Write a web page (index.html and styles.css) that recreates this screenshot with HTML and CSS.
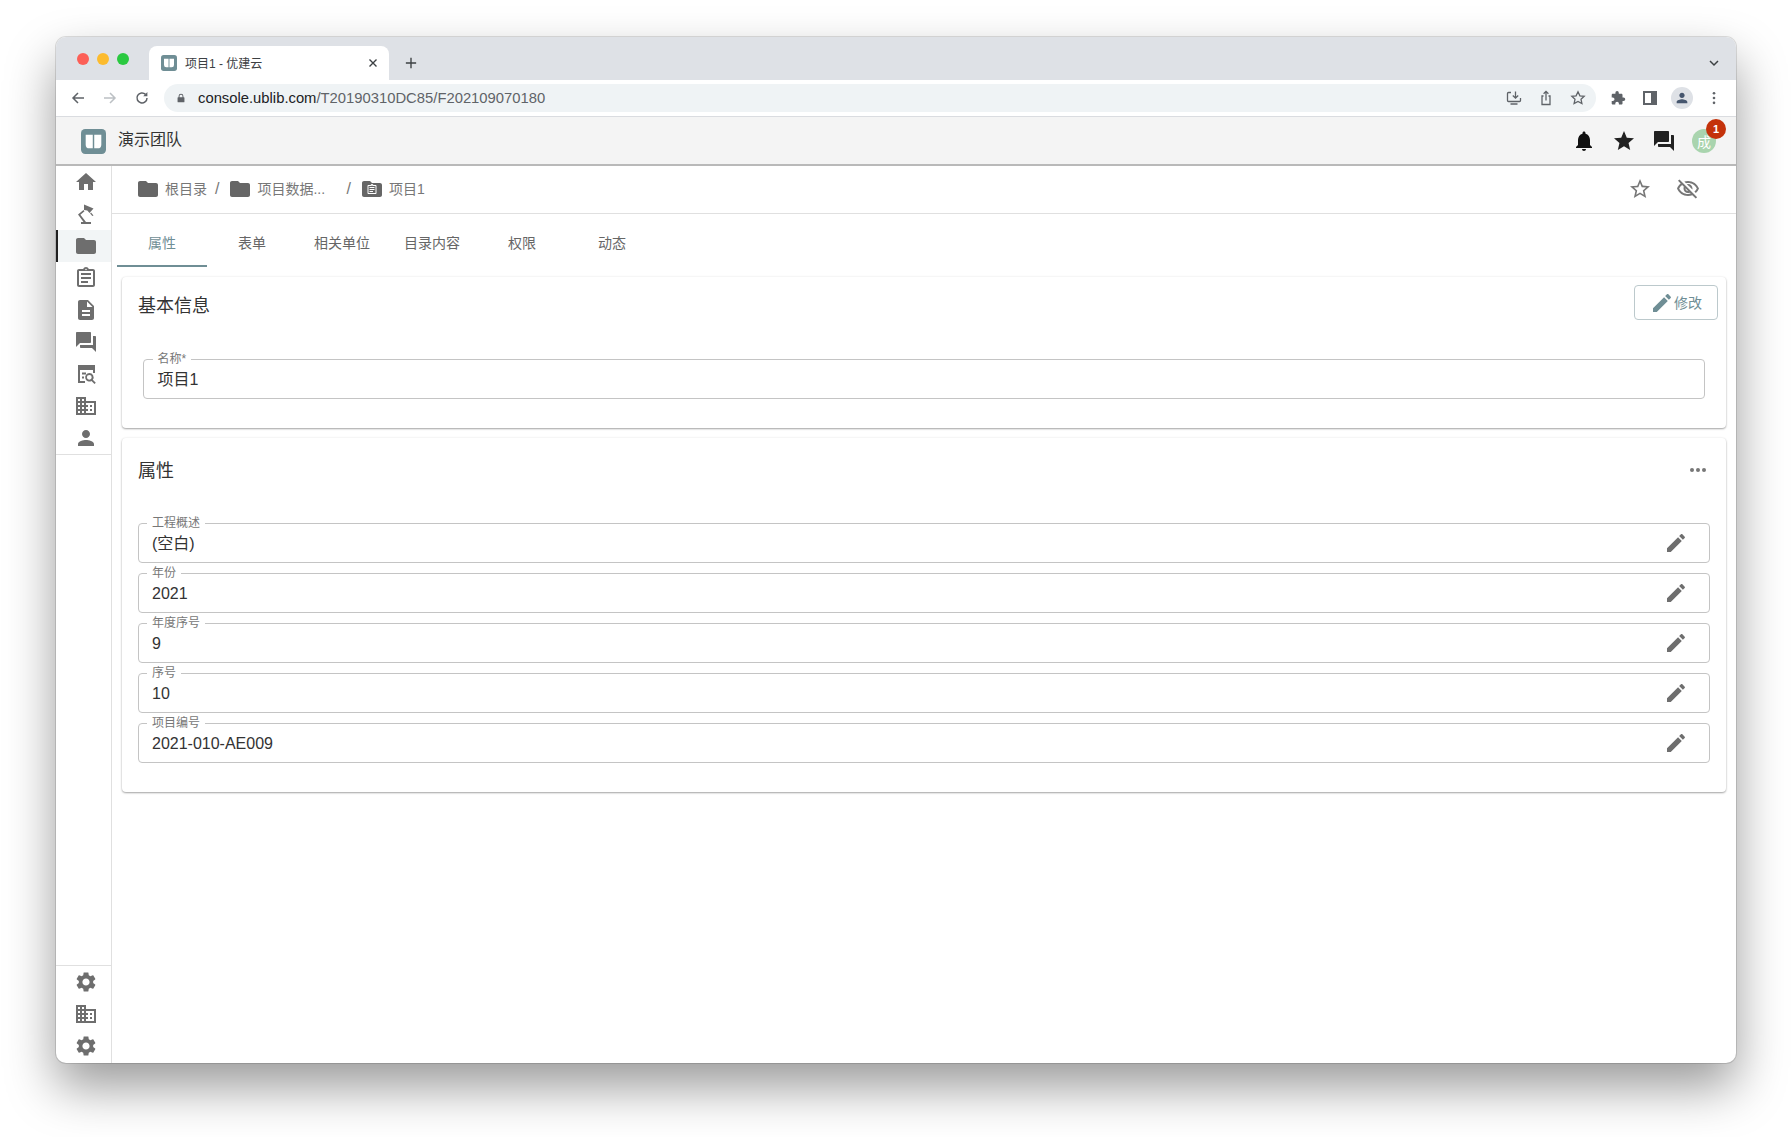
FILE: index.html
```html
<!DOCTYPE html>
<html lang="zh-CN">
<head>
<meta charset="utf-8">
<title>项目1 - 优建云</title>
<link rel="stylesheet" href="styles.css">
</head>
<body>
<svg class="defs" width="0" height="0" aria-hidden="true">
  <defs>
    <symbol id="i-home" viewBox="0 0 24 24"><path d="M10 20v-6h4v6h5v-8h3L12 3 2 12h3v8z"/></symbol>
    <symbol id="i-folder" viewBox="0 0 24 24"><path d="M10 4H4c-1.1 0-1.99.9-1.99 2L2 18c0 1.1.9 2 2 2h16c1.1 0 2-.9 2-2V8c0-1.1-.9-2-2-2h-8l-2-2z"/></symbol>
    <symbol id="i-clip" viewBox="0 0 24 24"><path d="M7 15h7v2H7zm0-4h10v2H7zm0-4h10v2H7z"/><path d="M19 3h-4.18C14.4 1.84 13.3 1 12 1c-1.3 0-2.4.84-2.82 2H5c-1.1 0-2 .9-2 2v14c0 1.1.9 2 2 2h14c1.1 0 2-.9 2-2V5c0-1.1-.9-2-2-2zm-7-.25c.41 0 .75.34.75.75s-.34.75-.75.75-.75-.34-.75-.75.34-.75.75-.75zM19 19H5V5h14v14z"/></symbol>
    <symbol id="i-doc" viewBox="0 0 24 24"><path d="M14 2H6c-1.1 0-1.99.9-1.99 2L4 20c0 1.1.89 2 1.99 2H18c1.1 0 2-.9 2-2V8l-6-6zm2 16H8v-2h8v2zm0-4H8v-2h8v2zm-3-5V3.5L18.5 9H13z"/></symbol>
    <symbol id="i-forum" viewBox="0 0 24 24"><path d="M21 6h-2v9H6v2c0 .55.45 1 1 1h11l4 4V7c0-.55-.45-1-1-1zm-4 6V3c0-.55-.45-1-1-1H3c-.55 0-1 .45-1 1v14l4-4h10c.55 0 1-.45 1-1z"/></symbol>
    <symbol id="i-domain" viewBox="0 0 24 24"><path d="M12 7V3H2v18h20V7H12zM6 19H4v-2h2v2zm0-4H4v-2h2v2zm0-4H4V9h2v2zm0-4H4V5h2v2zm4 12H8v-2h2v2zm0-4H8v-2h2v2zm0-4H8V9h2v2zm0-4H8V5h2v2zm10 12h-8v-2h2v-2h-2v-2h2v-2h-2V9h8v10zm-2-8h-2v2h2v-2zm0 4h-2v2h2v-2z"/></symbol>
    <symbol id="i-person" viewBox="0 0 24 24"><path d="M12 12c2.21 0 4-1.79 4-4s-1.79-4-4-4-4 1.79-4 4 1.79 4 4 4zm0 2c-2.67 0-8 1.34-8 4v2h16v-2c0-2.66-5.33-4-8-4z"/></symbol>
    <symbol id="i-gear" viewBox="0 0 24 24"><path d="M19.14 12.94c.04-.3.06-.61.06-.94 0-.32-.02-.64-.07-.94l2.03-1.58c.18-.14.23-.41.12-.61l-1.92-3.32c-.12-.22-.37-.29-.59-.22l-2.39.96c-.5-.38-1.03-.7-1.62-.94l-.36-2.54c-.04-.24-.24-.41-.48-.41h-3.84c-.24 0-.43.17-.47.41l-.36 2.54c-.59.24-1.13.57-1.62.94l-2.39-.96c-.22-.08-.47 0-.59.22L2.74 8.87c-.12.21-.08.47.12.61l2.03 1.58c-.05.3-.09.63-.09.94s.02.64.07.94l-2.03 1.58c-.18.14-.23.41-.12.61l1.92 3.32c.12.22.37.29.59.22l2.39-.96c.5.38 1.03.7 1.62.94l.36 2.54c.05.24.24.41.48.41h3.84c.24 0 .44-.17.47-.41l.36-2.54c.59-.24 1.13-.56 1.62-.94l2.39.96c.22.08.47 0 .59-.22l1.92-3.32c.12-.22.07-.47-.12-.61l-2.01-1.58zM12 15.6c-1.98 0-3.6-1.62-3.6-3.6s1.62-3.6 3.6-3.6 3.6 1.62 3.6 3.6-1.62 3.6-3.6 3.6z"/></symbol>
    <symbol id="i-edit" viewBox="0 0 24 24"><path d="M3 17.25V21h3.75L17.81 9.94l-3.75-3.75L3 17.25zM20.71 7.04c.39-.39.39-1.02 0-1.41l-2.34-2.34c-.39-.39-1.02-.39-1.41 0l-1.83 1.83 3.75 3.75 1.83-1.83z"/></symbol>
    <symbol id="i-star" viewBox="0 0 24 24"><path d="M12 17.27L18.18 21l-1.64-7.03L22 9.24l-7.19-.61L12 2 9.19 8.63 2 9.24l5.46 4.73L5.82 21z"/></symbol>
    <symbol id="i-starb" viewBox="0 0 24 24"><path d="M22 9.24l-7.19-.62L12 2 9.19 8.63 2 9.24l5.46 4.73L5.82 21 12 17.27 18.18 21l-1.63-7.03L22 9.24zM12 15.4l-3.76 2.27 1-4.28-3.32-2.88 4.38-.38L12 6.1l1.71 4.04 4.38.38-3.32 2.88 1 4.28L12 15.4z"/></symbol>
    <symbol id="i-logo" viewBox="0 0 24 24"><rect x="0" y="0" width="24" height="24" rx="4" fill="#6f8e95"/><path d="M4.5 5.5h6.8v13H8a3.5 3.5 0 0 1-3.5-3.5zM12.700 5.5h6.800V15a3.500 3.500 0 0 1-3.500 3.500h-3.300z" fill="#fff"/></symbol>
  </defs>
</svg>

<div class="window">
  <div class="tabstrip">
    <div class="lights"><i class="light red"></i><i class="light yellow"></i><i class="light green"></i></div>
    <div class="browser-tab">
      <svg class="favicon"><use href="#i-logo"/></svg>
      <span class="browser-tab-title">项目1 - 优建云</span>
      <svg class="tab-close" viewBox="0 0 12 12"><path d="M2.500 2.500l7 7M9.500 2.500l-7 7"/></svg>
    </div>
    <svg class="tab-plus" viewBox="0 0 14 14"><path d="M7 1v12M1 7h12"/></svg>
    <svg class="tab-menu" viewBox="0 0 12 12"><path d="M2 4l4 4 4-4"/></svg>
  </div>

  <div class="toolbar">
    <svg class="nav" viewBox="0 0 16 16"><path d="M14 8H3M8 3L3 8l5 5"/></svg>
    <svg class="nav nav-off" viewBox="0 0 16 16"><path d="M2 8h11M8 3l5 5-5 5"/></svg>
    <svg class="nav" viewBox="0 0 16 16"><path d="M13 8a5 5 0 1 1-1.500-3.600"/><path class="fill" d="M13.400 2v4.200H9.200z"/></svg>
    <div class="omnibox">
      <svg class="lock" viewBox="0 0 10 12"><path d="M2 5V3.600a3 3 0 0 1 6 0V5h.6c.4 0 .7.3.7.7v5c0 .4-.3.7-.7.7H1.400c-.4 0-.7-.3-.7-.7v-5c0-.4.3-.7.7-.7zm1.200 0h3.600V3.600a1.800 1.800 0 0 0-3.600 0z"/></svg>
      <span class="url"><b>console.ublib.com</b>/T20190310DC85/F202109070180</span>
      <span class="spacer"></span>
      <svg class="omni-icon" viewBox="0 0 16 16"><path d="M5 2.500H2.500a1 1 0 0 0-1 1v7a1 1 0 0 0 1 1h11a1 1 0 0 0 1-1V8M9.500 1.500v6.500M6.800 5.500l2.700 2.700 2.700-2.700M4.500 14h7"/></svg>
      <svg class="omni-icon" viewBox="0 0 16 16"><path d="M5.500 6H4v8.500h8V6h-1.500M8 10.500V1.500M5.600 3.800L8 1.400l2.400 2.400"/></svg>
      <svg class="omni-icon" viewBox="0 0 16 16"><path d="M8 1.800l1.900 4 4.300.5-3.200 3 .9 4.300L8 11.400l-3.900 2.200.9-4.300-3.200-3 4.300-.5z"/></svg>
    </div>
    <svg class="ext" viewBox="0 0 15 16"><path d="M13 7.500h-1V5c0-.7-.5-1.200-1.200-1.200H8.300V2.700a1.700 1.700 0 0 0-3.400 0v1.100H2.400c-.7 0-1.200.5-1.200 1.200v2.400h1a1.800 1.800 0 0 1 0 3.600h-1v2.400c0 .7.5 1.200 1.200 1.200h2.400v-1a1.800 1.800 0 0 1 3.600 0v1h2.400c.7 0 1.200-.5 1.200-1.200V11h1a1.750 1.750 0 0 0 0-3.500z"/></svg>
    <svg class="panel" viewBox="0 0 14 14"><path d="M0 0h14v14H0zM2 2v10h6V2z" fill-rule="evenodd"/></svg>
    <div class="profile"><svg viewBox="0 0 24 24"><use href="#i-person"/></svg></div>
    <svg class="kebab" viewBox="0 0 4 16"><circle cx="2" cy="2.500" r="1.500"/><circle cx="2" cy="8" r="1.500"/><circle cx="2" cy="13.500" r="1.500"/></svg>
  </div>

  <header class="appbar">
    <svg class="app-logo"><use href="#i-logo"/></svg>
    <span class="app-team">演示团队</span>
    <span class="spacer"></span>
    <svg class="app-icon bell" viewBox="0 0 24 24"><path d="M12 22c1.100 0 2-.9 2-2h-4c0 1.100.89 2 2 2zm6-6v-5c0-3.070-1.640-5.640-4.500-6.320V4c0-.83-.67-1.500-1.500-1.500s-1.500.67-1.500 1.500v.68C7.630 5.360 6 7.920 6 11v5l-2 2v1h16v-1l-2-2z"/></svg>
    <svg class="app-icon"><use href="#i-star"/></svg>
    <svg class="app-icon"><use href="#i-forum"/></svg>
    <div class="avatar">成<span class="badge">1</span></div>
  </header>

  <div class="body">
    <nav class="sidebar">
      <div class="side-top">
        <a class="side-item"><svg><use href="#i-home"/></svg></a>
        <a class="side-item"><svg viewBox="0 0 24 24"><path d="M7 20h10v2H7zM9.500 8L4 12.500 9.500 20H12L6.400 12.700 10.500 9.300zM10 2.500l9.500 4-4 4.500-2.200-2.400-3.300-.6z"/><path d="M17 10.500l2.500 3-1.200.5-2.200-2.600z"/></svg></a>
        <a class="side-item active"><svg><use href="#i-folder"/></svg></a>
        <a class="side-item"><svg><use href="#i-clip"/></svg></a>
        <a class="side-item"><svg><use href="#i-doc"/></svg></a>
        <a class="side-item"><svg><use href="#i-forum"/></svg></a>
        <a class="side-item"><svg viewBox="0 0 24 24"><path d="M4 3h17v8h-2V8H6v11h5v2H4zM8 10.500h4v2H8zM8 14.500h2v2H8z"/><path d="M15.300 11a4.300 4.300 0 0 1 3.500 6.800l3 3-1.300 1.300-3-3A4.300 4.300 0 1 1 15.300 11zm0 1.900a2.400 2.400 0 1 0 0 4.800 2.400 2.400 0 0 0 0-4.800z"/></svg></a>
        <a class="side-item"><svg><use href="#i-domain"/></svg></a>
        <a class="side-item"><svg><use href="#i-person"/></svg></a>
      </div>
      <div class="side-bottom">
        <a class="side-item"><svg><use href="#i-gear"/></svg></a>
        <a class="side-item"><svg><use href="#i-domain"/></svg></a>
        <a class="side-item"><svg><use href="#i-gear"/></svg></a>
      </div>
    </nav>

    <main class="main">
      <div class="crumbs">
        <svg class="crumb-icon"><use href="#i-folder"/></svg><span class="crumb">根目录</span><span class="sep">/</span>
        <svg class="crumb-icon"><use href="#i-folder"/></svg><span class="crumb crumb-wide">项目数据...</span><span class="sep">/</span>
        <svg class="crumb-icon" viewBox="0 0 24 24"><path d="M10 4H4c-1.100 0-2 .9-2 2v12c0 1.100.9 2 2 2h16c1.100 0 2-.9 2-2V8c0-1.100-.9-2-2-2h-8z"/><g class="crumb-clip"><use href="#i-clip" width="24" height="24"/></g></svg><span class="crumb">项目1</span>
        <span class="spacer"></span>
        <svg class="crumb-action"><use href="#i-starb"/></svg>
        <svg class="crumb-action" viewBox="0 0 24 24"><path d="M12 6c3.790 0 7.170 2.130 8.820 5.500-.59 1.220-1.420 2.270-2.410 3.120l1.410 1.410c1.390-1.230 2.490-2.770 3.180-4.530C21.270 7.110 17 4 12 4c-1.270 0-2.490.2-3.640.57l1.650 1.650C10.660 6.090 11.320 6 12 6zm-1.070 1.140L13 9.210c.57.25 1.030.71 1.280 1.280l2.070 2.070c.08-.34.14-.7.14-1.070C16.500 9.010 14.480 7 12 7c-.37 0-.72.05-1.070.14zM2.010 3.870l2.680 2.680C3.060 7.830 1.770 9.530 1 11.500 2.730 15.890 7 19 12 19c1.520 0 2.980-.29 4.320-.82l3.420 3.420 1.410-1.410L3.420 2.450 2.010 3.870zm7.500 7.500l2.610 2.610c-.04.01-.08.02-.12.02-1.380 0-2.500-1.120-2.500-2.500 0-.05.01-.08.01-.13zm-3.400-3.400l1.750 1.750c-.23.55-.36 1.150-.36 1.780 0 2.480 2.020 4.500 4.500 4.500.63 0 1.230-.13 1.770-.36l.98.98c-.88.24-1.800.38-2.750.38-3.790 0-7.170-2.130-8.820-5.500.7-1.430 1.720-2.610 2.930-3.530z"/></svg>
      </div>

      <div class="tabs">
        <a class="tab active">属性</a>
        <a class="tab">表单</a>
        <a class="tab">相关单位</a>
        <a class="tab">目录内容</a>
        <a class="tab">权限</a>
        <a class="tab">动态</a>
      </div>

      <section class="card card-basic">
        <div class="card-head">
          <h2 class="card-title">基本信息</h2>
          <button class="edit-btn"><svg><use href="#i-edit"/></svg><span class="edit-text">修改</span></button>
        </div>
        <fieldset class="field field-name">
          <legend class="field-label">名称*</legend>
          <div class="field-value">项目1</div>
        </fieldset>
      </section>

      <section class="card card-props">
        <div class="card-head">
          <h2 class="card-title">属性</h2>
          <svg class="more" viewBox="0 0 16 4"><circle cx="2" cy="2" r="2"/><circle cx="8" cy="2" r="2"/><circle cx="14" cy="2" r="2"/></svg>
        </div>
        <div class="field-list">
          <fieldset class="field">
            <legend class="field-label">工程概述</legend>
            <div class="field-value">(空白)</div>
            <svg class="field-edit"><use href="#i-edit"/></svg>
          </fieldset>
          <fieldset class="field">
            <legend class="field-label">年份</legend>
            <div class="field-value">2021</div>
            <svg class="field-edit"><use href="#i-edit"/></svg>
          </fieldset>
          <fieldset class="field">
            <legend class="field-label">年度序号</legend>
            <div class="field-value">9</div>
            <svg class="field-edit"><use href="#i-edit"/></svg>
          </fieldset>
          <fieldset class="field">
            <legend class="field-label">序号</legend>
            <div class="field-value">10</div>
            <svg class="field-edit"><use href="#i-edit"/></svg>
          </fieldset>
          <fieldset class="field">
            <legend class="field-label">项目编号</legend>
            <div class="field-value">2021-010-AE009</div>
            <svg class="field-edit"><use href="#i-edit"/></svg>
          </fieldset>
        </div>
      </section>
    </main>
  </div>
</div>
</body>
</html>
```

FILE: styles.css
```css
* { box-sizing: border-box; }
html, body { margin: 0; height: 100%; }
body {
  padding: 37px 56px 74px;
  background: #fff;
  font-family: "Liberation Sans", "Noto Sans CJK SC", sans-serif;
  color: #333;
  overflow: hidden;
}
.defs { position: absolute; }
.spacer { flex: 1; }

.window {
  height: 1026px;
  display: flex;
  flex-direction: column;
  background: #fff;
  border-radius: 10px;
  overflow: hidden;
  box-shadow: 0 0 0 1px rgba(0,0,0,.12), 0 24px 50px rgba(0,0,0,.4);
}

/* browser chrome */
.tabstrip {
  height: 43px;
  flex: none;
  background: #dee1e6;
  display: flex;
  align-items: flex-end;
}
.lights { display: flex; gap: 8px; align-self: flex-start; padding: 16px 0 0 21px; width: 93px; flex: none; }
.light { width: 12px; height: 12px; border-radius: 50%; }
.red { background: #fc5f57; }
.yellow { background: #fcbb2e; }
.green { background: #2ac940; }
.browser-tab {
  width: 240px;
  height: 34px;
  background: #fff;
  border-radius: 8px 8px 0 0;
  display: flex;
  align-items: center;
  padding: 0 10px 0 12px;
  gap: 8px;
  font-size: 12px;
  color: #3c4043;
}
.favicon { width: 16px; height: 16px; flex: none; }
.browser-tab-title { flex: 1; margin-bottom: 2px; }
.tab-close { width: 12px; height: 12px; fill: none; stroke: #3c4043; stroke-width: 1.4; }
.tab-plus { width: 12px; height: 12px; fill: none; stroke: #3c4043; stroke-width: 1.6; margin: 0 0 11px 16px; }
.tab-menu { width: 12px; height: 12px; fill: none; stroke: #3c4043; stroke-width: 1.5; margin: 0 16px 11px auto; }

.toolbar {
  height: 37px;
  flex: none;
  background: #fff;
  border-bottom: 1px solid #dadce0;
  display: flex;
  align-items: center;
  padding: 0 20px 1px 14px;
}
.nav { width: 16px; height: 16px; fill: none; stroke: #5f6368; stroke-width: 1.5; margin-right: 16px; flex: none; }
.nav .fill { fill: #5f6368; stroke: none; }
.nav-off { stroke: #bcc0c4; }
.omnibox {
  flex: 1;
  height: 28px;
  background: #eff3f5;
  border-radius: 14px;
  display: flex;
  align-items: center;
  padding: 0 10px 0 13px;
  margin-left: -2px;
  margin-right: 14px;
}
.lock { width: 8px; height: 10px; fill: #5f6368; flex: none; margin-right: 13px; }
.url { font-size: 14.8px; color: #5f6368; }
.url b { font-weight: 400; color: #202124; }
.omni-icon { width: 16px; height: 16px; fill: none; stroke: #5f6368; stroke-width: 1.3; margin-left: 16px; flex: none; }
.ext { width: 16px; height: 16px; fill: #5f6368; flex: none; margin-right: 17px; }
.panel { width: 14px; height: 14px; fill: #5f6368; flex: none; margin-right: 14px; }
.profile { width: 22px; height: 22px; border-radius: 50%; background: #dee1e6; display: flex; align-items: center; justify-content: center; margin-right: 19px; flex: none; }
.profile svg { width: 16px; height: 16px; fill: #46566e; }
.kebab { width: 4px; height: 14px; fill: #5f6368; flex: none; }

/* app header */
.appbar {
  height: 49px;
  flex: none;
  background: #f4f4f4;
  border-bottom: 2px solid #b9b9b9;
  display: flex;
  align-items: center;
  padding: 0 20px 0 25px;
}
.app-logo { width: 25px; height: 25px; margin: 2px 12px 0 0; }
.app-team { font-size: 16px; color: #333; margin-bottom: 6px; }
.app-icon { width: 24px; height: 24px; fill: #212121; margin-right: 16px; flex: none; }
.bell { fill: #111; }
.avatar {
  width: 24px; height: 24px; border-radius: 50%;
  background: #a9d4ae; color: #fff; font-size: 14px;
  display: flex; align-items: center; justify-content: center;
  position: relative; flex: none;
}
.badge {
  position: absolute; top: -10px; right: -10px;
  width: 20px; height: 20px; border-radius: 50%;
  background: #c4320a; color: #fff; font-size: 11px; font-weight: 700;
  display: flex; align-items: center; justify-content: center;
}

/* layout */
.body { flex: 1; display: flex; min-height: 0; }
.sidebar {
  width: 56px;
  flex: none;
  border-right: 1px solid #e0e0e0;
  display: flex;
  flex-direction: column;
  justify-content: space-between;
}
.side-top { border-bottom: 1px solid #e0e0e0; }
.side-bottom { border-top: 1px solid #e0e0e0; padding-bottom: 1px; }
.side-item {
  height: 32px;
  display: flex;
  align-items: center;
  border-left: 2px solid transparent;
  padding-left: 16px;
}
.side-item svg { width: 24px; height: 24px; fill: #6e6e6e; }
.side-item.active { background: #f2f5f6; border-left-color: #212121; }

.main { flex: 1; min-width: 0; padding-left: 5px; }
.crumbs {
  height: 48px;
  border-bottom: 1px solid #e0e0e0;
  margin-left: -5px;
  display: flex;
  align-items: center;
  padding: 0 36px 2px 24px;
  font-size: 14px;
  color: #777;
}
.crumb-icon { width: 24px; height: 24px; fill: #666; margin-right: 5px; flex: none; }
.crumb-clip { fill: #fff; transform: translate(6px, 6.500px) scale(.5); }
.crumb { white-space: nowrap; margin-bottom: 2px; }
.crumb-wide { width: 81px; }
.sep { margin: 0 9px 0 8px; font-size: 16px; }
.crumb-action { width: 24px; height: 24px; fill: #777; margin-left: 24px; flex: none; }

.tabs { display: flex; height: 53px; }
.tab {
  width: 90px;
  display: flex;
  align-items: center;
  justify-content: center;
  font-size: 14px;
  color: #666;
  border-bottom: 2px solid transparent;
  padding-top: 4px;
}
.tab.active { color: #6f8e95; border-bottom-color: #6f8e95; }

.card {
  margin: 10px 10px 0 5px;
  background: #fff;
  border-radius: 4px;
  box-shadow: 0 1px 2px rgba(0,0,0,.35), 0 0 3px rgba(0,0,0,.06);
  padding: 0 16px;
}
.card-basic { height: 151px; }
.card-props { height: 354px; }
.card-head { height: 56px; display: flex; align-items: center; justify-content: space-between; }
.card-props .card-head { height: 64px; }
.card-title { margin: 0 0 2px; font-size: 18px; font-weight: 400; color: #333; }
.edit-btn {
  width: 84px; height: 35px;
  margin: 0 -8px 5px 0;
  background: #fff;
  border: 1px solid #bcc9cc;
  border-radius: 4px;
  color: #6f8e95;
  font: 14px "Liberation Sans", "Noto Sans CJK SC", sans-serif;
  display: flex; align-items: center; justify-content: center;
  padding: 0;
}
.edit-btn svg { width: 24px; height: 24px; fill: #6f8e95; }
.edit-text { margin-bottom: 2px; }
.more { width: 16px; height: 4px; fill: #777; margin-right: 4px; }

.field {
  position: relative;
  margin: 0;
  padding: 0 13px;
  height: 46px;
  border: 1px solid #c4c4c4;
  border-radius: 4px;
  min-width: 0;
}
.field-name { margin: 20px 5px 0; padding: 0 13.5px; }
.field-label {
  font-size: 12px;
  line-height: 12px;
  color: #777;
  padding: 0 5px;
  margin-left: -5px;
}
.field-value { font-size: 16px; line-height: 20px; color: #333; margin-top: 5px; }
.field-list { display: flex; flex-direction: column; gap: 4px; padding-top: 15px; }
.field-edit { position: absolute; right: 21px; top: 2px; width: 24px; height: 24px; fill: #6e6e6e; }
```
